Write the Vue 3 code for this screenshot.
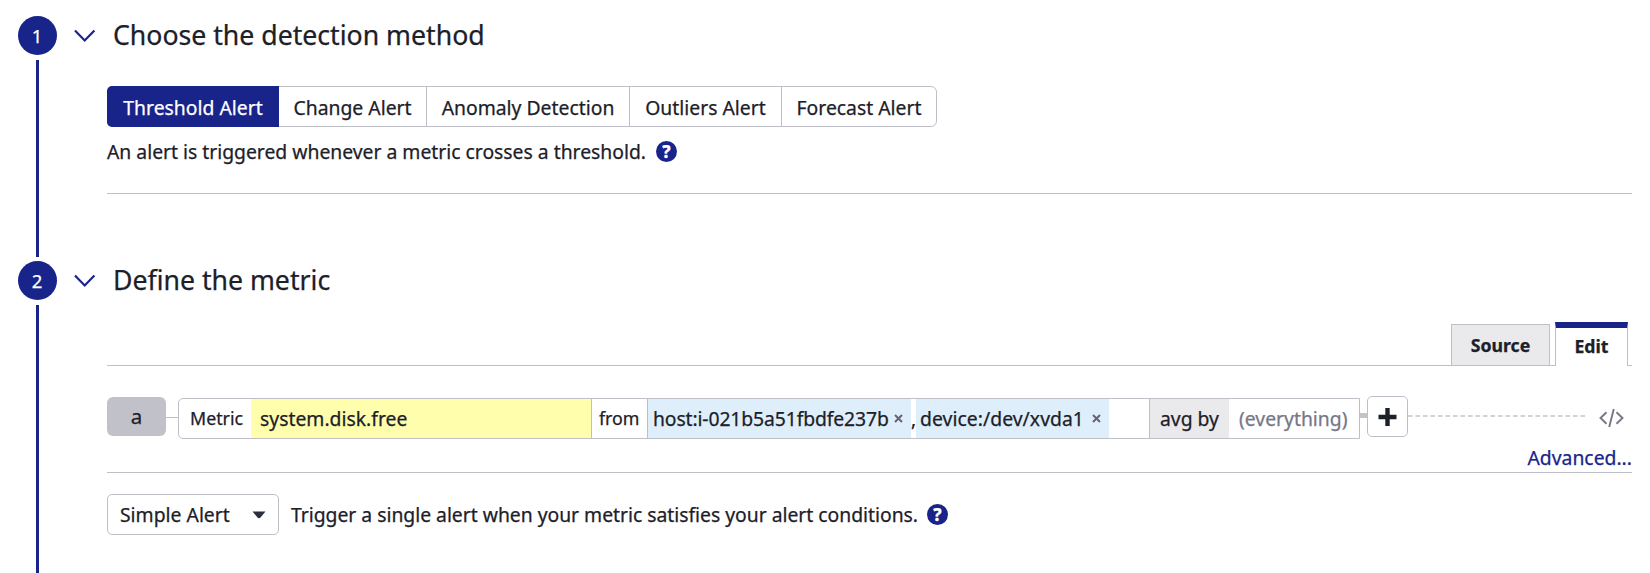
<script setup>
const methods = [
  { label: 'Threshold Alert', cls: 'm1' },
  { label: 'Change Alert', cls: 'm2' },
  { label: 'Anomaly Detection', cls: 'm3' },
  { label: 'Outliers Alert', cls: 'm4' },
  { label: 'Forecast Alert', cls: 'm5' },
]
</script>

<template>
  <main class="page">
    <section class="step first">
      <div class="rail">
        <span class="num">1</span>
        <span class="line"></span>
      </div>
      <div class="body">
        <header class="head">
          <svg class="chev" width="22" height="14" viewBox="0 0 22 14"><path d="M1 1.5 10.7 11.5 20.4 1.5" fill="none" stroke="#19248b" stroke-width="2.2" /></svg>
          <h2>Choose the detection method</h2>
        </header>
        <div class="methods">
          <button v-for="m in methods" :key="m.label" :class="['method', m.cls]">{{ m.label }}</button>
        </div>
        <p class="desc">
          <span class="desc-text">An alert is triggered whenever a metric crosses a threshold.</span>
          <span class="help">?</span>
        </p>
        <hr />
      </div>
    </section>

    <section class="step second">
      <div class="rail">
        <span class="num">2</span>
        <span class="line"></span>
      </div>
      <div class="body">
        <header class="head">
          <svg class="chev" width="22" height="14" viewBox="0 0 22 14"><path d="M1 1.5 10.7 11.5 20.4 1.5" fill="none" stroke="#19248b" stroke-width="2.2" /></svg>
          <h2>Define the metric</h2>
        </header>
        <nav class="tabs">
          <span class="tab">Source</span>
          <span class="gap"></span>
          <span class="tab active">Edit</span>
          <span class="gap end"></span>
        </nav>
        <div class="query">
          <span class="letter">a</span>
          <span class="link"></span>
          <div class="box">
            <span class="cell label">Metric</span>
            <span class="cell metric">system.disk.free</span>
            <span class="cell from">from</span>
            <span class="cell scope">
              <span class="tag host"><span class="host-text">host:i-021b5a51fbdfe237b</span><svg width="9" height="9" viewBox="0 0 9 9"><path d="M1 1 8 8M8 1 1 8" stroke="#646472" stroke-width="2" /></svg></span>
              <span class="comma">,</span>
              <span class="tag device"><span class="device-text">device:/dev/xvda1</span><svg width="9" height="9" viewBox="0 0 9 9"><path d="M1 1 8 8M8 1 1 8" stroke="#646472" stroke-width="2" /></svg></span>
            </span>
            <span class="cell avg">avg by</span>
            <span class="cell all">(everything)</span>
          </div>
          <span class="joint"></span>
          <button class="plus"><svg width="20" height="20" viewBox="0 0 20 20"><path d="M9.5 1V19M.5 10H18.500" stroke="#1c2028" stroke-width="4.4" /></svg></button>
          <svg class="dash" width="180" height="2" viewBox="0 0 180 2"><path d="M0 1H180" stroke="#c4c4cc" stroke-width="1.4" stroke-dasharray="4.6 2.9" /></svg>
          <svg class="code" width="25" height="20" viewBox="0 0 25 20"><path d="M7.500 4.200 1.500 10 7.500 15.800M17.500 4.200 23.500 10 17.500 15.800M14.800 1 10.200 19" fill="none" stroke="#777785" stroke-width="1.9" /></svg>
        </div>
        <div class="advanced"><a>Advanced...</a></div>
        <hr />
        <div class="alert-row">
          <span class="select"><span class="select-text">Simple Alert</span><svg width="14" height="8" viewBox="0 0 14 8"><path d="M0.5 .5H13.5L8.5 6.5Q7 8 5.5 6.5Z" fill="#2b2e3c" /></svg></span>
          <span class="trigger">Trigger a single alert when your metric satisfies your alert conditions.</span>
          <span class="help">?</span>
        </div>
      </div>
    </section>
  </main>
</template>

<style>
html, body { margin: 0; background: #fff; overflow: hidden; }
</style>

<style scoped>
* { box-sizing: border-box; }
.page { width: 1650px; height: 573px; overflow: hidden; background: #fff; color: #1c2028; font-family: "Noto Sans", sans-serif; font-size: 19.35px; white-space: nowrap; -webkit-text-stroke: 0.25px currentColor; }
.step { display: flex; }
.first { height: 245px; padding-top: 16px; box-sizing: content-box; }
.second { height: 312px; }
.rail { width: 38px; margin-left: 18px; display: flex; flex-direction: column; align-items: center; flex: none; }
.num { width: 39px; height: 39px; border-radius: 50%; background: #19248b; color: #fff; display: flex; align-items: center; justify-content: center; font-size: 18.5px; flex: none; }
.line { width: 3px; flex: 1; background: #19248b; margin: 5px 0 4px; }
.second .line { margin-bottom: 0; }
.body { width: 1525px; margin-left: 51px; }
.head { height: 39px; display: flex; align-items: center; margin-left: -33px; }
.chev { margin-top: 1px; }
h2 { margin: -2px 0 0 17px; font-size: 26.65px; font-weight: 400; line-height: 38px; }
.methods { display: flex; width: 830px; height: 41px; margin-top: 31px; border: 1px solid #bfbfc8; border-radius: 6px; }
.method { font: inherit; color: inherit; background: none; border: 0; border-right: 1px solid #bfbfc8; padding: 2px 0 0; }
.method:last-child { border-right: 0; }
.method.m1 { width: 172px; height: 41px; background: #19248b; color: #fff; margin: -1px 0 -1px -1px; border-right: 0; border-radius: 5px 0 0 5px; }
.m2 { width: 148px; }
.m3 { width: 203px; }
.m4 { width: 152px; }
.m5 { flex: 1; }
.desc { margin: 10px 0 0; height: 28px; display: flex; align-items: center; }
.desc-text { width: 549px; letter-spacing: -0.01px; }
.help { width: 21px; height: 21px; border-radius: 50%; background: #19248b; color: #fff; font-size: 17px; font-weight: 800; display: inline-flex; align-items: center; justify-content: center; line-height: 21px; flex: none; }
hr { border: 0; height: 1px; background: #bfbfc8; margin: 0; }
.desc + hr { margin-top: 28px; }
.tabs { display: flex; justify-content: flex-end; align-items: flex-end; height: 44px; margin-top: 22px; background: linear-gradient(#bfbfc8, #bfbfc8) bottom / 100% 1px no-repeat; }
.tab { width: 99px; height: 42px; border: 1px solid #bfbfc8; background: #eaeaed; font-weight: 700; font-size: 17.7px; display: flex; align-items: center; justify-content: center; }
.tab.active { width: 73px; height: 44px; background: #fff; border-top: 6px solid #19248b; border-bottom: 0; padding-bottom: 3px; }
.gap { width: 5px; }
.gap.end { width: 4px; }
.query { display: flex; margin-top: 30px; height: 43px; }
.letter { width: 59px; height: 39px; margin-top: 1px; padding-bottom: 2px; background: #c1c1c9; border-radius: 6px; display: flex; align-items: center; justify-content: center; font-size: 20.5px; }
.link { width: 12px; height: 1px; background: #bfbfc8; margin-top: 21px; }
.box { display: flex; width: 1182px; height: 41px; margin-top: 2px; border: 1px solid #bfbfc8; border-radius: 5px 0 0 5px; }
.cell { display: flex; align-items: center; height: 39px; flex: none; }
.label { width: 72px; padding: 0 0 2px 11px; font-size: 17.8px; }
.metric { width: 341px; padding-left: 9px; background: #fefeac; border-right: 1px solid #bfbfc8; }
.from { width: 56px; padding: 0 0 2px 7px; font-size: 17.8px; border-right: 1px solid #bfbfc8; }
.scope { width: 502px; border-right: 1px solid #bfbfc8; }
.tag { display: flex; align-items: center; height: 39px; background: #deeffb; }
.host { width: 263px; padding-left: 5px; }
.host-text { width: 241px; letter-spacing: -0.12px; }
.device { width: 193px; padding-left: 4px; }
.device-text { width: 172px; letter-spacing: 0.05px; }
.comma { width: 4px; margin-right: 1px; }
.avg { width: 79px; padding-left: 10px; background: #eaeaed; }
.all { padding-left: 10px; color: #777785; }
.joint { width: 7px; height: 5px; background: #c4c4cc; margin-top: 17px; }
.plus { width: 41px; height: 41px; border: 1px solid #bfbfc8; border-radius: 5px; background: #fff; padding: 0; display: flex; align-items: center; justify-content: center; }
.dash { margin-top: 19px; }
.code { margin: 12px 0 0 11px; }
.advanced { display: flex; justify-content: flex-end; height: 33px; line-height: 37px; color: #19248b; }
.alert-row { display: flex; align-items: center; height: 41px; margin-top: 21px; }
.select { width: 172px; height: 41px; border: 1px solid #bfbfc8; border-radius: 5px; display: flex; align-items: center; justify-content: space-between; padding: 0 12px; }
.trigger { width: 636px; margin-left: 12px; letter-spacing: -0.02px; }
</style>
